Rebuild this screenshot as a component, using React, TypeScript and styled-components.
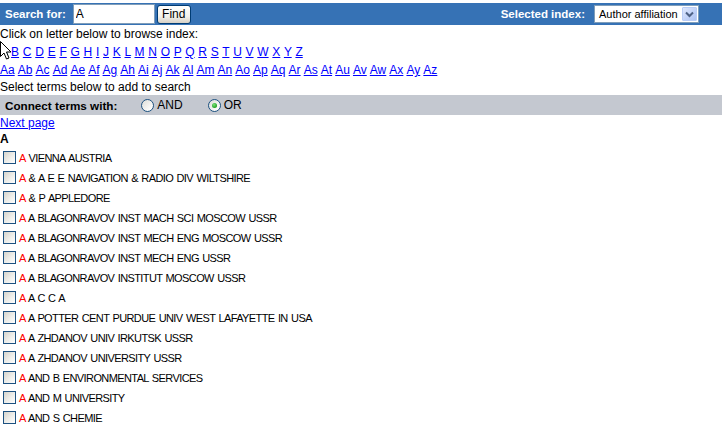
import React from "react";
import styled, { createGlobalStyle } from "styled-components";

const GlobalStyle = createGlobalStyle`
  html, body {
    margin: 0;
    padding: 0;
    background: #ffffff;
  }
  body {
    font-family: "Liberation Sans", Arial, sans-serif;
    font-size: 12px;
    color: #000000;
  }
`;

const Page = styled.div`
  padding-top: 3px;
`;

const SearchBar = styled.form`
  display: flex;
  align-items: center;
  height: 22px;
  margin: 0;
  padding: 0 23px 0 5px;
  background: #3672b5;
`;

const BarLabel = styled.span`
  color: #ffffff;
  font-weight: bold;
  font-size: 11.5px;
  white-space: nowrap;
`;

const SearchInput = styled.input`
  box-sizing: border-box;
  width: 82px;
  height: 20px;
  margin: 0 0 0 7px;
  padding: 0 2px;
  border: 1px solid #7f9db9;
  font-family: "Liberation Sans", Arial, sans-serif;
  font-size: 12px;
  color: #000;
  outline: none;
`;

const FindButton = styled.button`
  box-sizing: border-box;
  width: 34px;
  height: 19px;
  margin-left: 2px;
  padding: 0;
  border: 1px solid #003c74;
  border-radius: 3px;
  background: linear-gradient(#ffffff 0%, #f4f3ee 60%, #d6d0c5 100%);
  font-family: "Liberation Sans", Arial, sans-serif;
  font-size: 12px;
  color: #000;
`;

const Spacer = styled.div`
  flex: 1;
`;

const IndexSelect = styled.div`
  box-sizing: border-box;
  display: flex;
  align-items: center;
  width: 105px;
  height: 18px;
  margin-left: 9px;
  padding: 1px;
  border: 1px solid #7f9db9;
  background: #ffffff;
`;

const SelectValue = styled.span`
  flex: 1;
  padding-left: 3px;
  font-size: 11px;
  white-space: nowrap;
`;

const SelectArrow = styled.span`
  box-sizing: border-box;
  display: flex;
  align-items: center;
  justify-content: center;
  width: 15px;
  height: 14px;
  border: 1px solid #b9cdf6;
  border-radius: 1px;
  background: linear-gradient(135deg, #dfe8fd 0%, #bfd0f7 60%, #aec3f1 100%);
`;

const Line = styled.div<{ $h?: number }>`
  height: ${({ $h }) => $h ?? 18}px;
  line-height: ${({ $h }) => $h ?? 18}px;
  white-space: nowrap;
`;

const LinkLine = styled(Line)`
  position: relative;
  word-spacing: 0.4px;
`;

const Link = styled.a`
  color: #0000ff;
  text-decoration: underline;
  cursor: pointer;
`;

const Cursor = styled.svg`
  position: absolute;
  left: 0;
  top: -2px;
`;

const ConnectBar = styled.div`
  display: flex;
  align-items: center;
  height: 20px;
  padding-left: 5px;
  background: #c4c8d0;
`;

const ConnectLabel = styled.span`
  font-weight: bold;
  font-size: 11.7px;
  margin-right: 24px;
`;

const RadioOption = styled.label<{ $gap?: number }>`
  display: flex;
  align-items: center;
  gap: 3px;
  margin-right: ${({ $gap }) => $gap ?? 0}px;
  font-size: 12px;
`;

const RadioCircle = styled.span<{ $checked?: boolean }>`
  box-sizing: border-box;
  position: relative;
  display: inline-block;
  width: 13px;
  height: 13px;
  border: 1px solid #1c5180;
  border-radius: 50%;
  background: linear-gradient(135deg, #dcdcd7 0%, #ffffff 90%);

  &::after {
    content: "";
    display: ${({ $checked }) => ($checked ? "block" : "none")};
    position: absolute;
    left: 3px;
    top: 3px;
    width: 5px;
    height: 5px;
    border-radius: 50%;
    background: radial-gradient(circle at 40% 35%, #7be27b 0%, #21a121 70%);
  }
`;

const Heading = styled.div`
  height: 16px;
  line-height: 16px;
  font-weight: bold;
`;

const TermList = styled.ul`
  list-style: none;
  margin: 0;
  padding: 0;
`;

const TermRow = styled.li`
  display: flex;
  align-items: center;
  height: 20px;
  padding-left: 3px;
  font-size: 11px;
  letter-spacing: -0.6px;
  word-spacing: 0.9px;
  white-space: pre;
`;

const CheckBox = styled.span`
  box-sizing: border-box;
  flex: none;
  width: 13px;
  height: 13px;
  margin-right: 3px;
  border: 1px solid #1c5180;
  background: linear-gradient(135deg, #d4d4ce 0%, #eeeeea 55%, #ffffff 100%);
`;

const TermText = styled.span`
  padding-top: 2px;
`;

const Match = styled.span`
  color: #ff0000;
`;

const letters = "BCDEFGHIJKLMNOPQRSTUVWXYZ".split("");
const subLetters = "abcdefghijklmnopqrstuvwxyz".split("").map((c) => "A" + c);

const terms = [
  " VIENNA AUSTRIA",
  " & A E E NAVIGATION & RADIO DIV WILTSHIRE",
  " & P APPLEDORE",
  " A BLAGONRAVOV INST MACH SCI MOSCOW USSR",
  " A BLAGONRAVOV INST MECH ENG MOSCOW USSR",
  " A BLAGONRAVOV INST MECH ENG USSR",
  " A BLAGONRAVOV INSTITUT MOSCOW USSR",
  " A C C A",
  " A POTTER CENT PURDUE UNIV WEST LAFAYETTE IN USA",
  " A ZHDANOV UNIV IRKUTSK USSR",
  " A ZHDANOV UNIVERSITY USSR",
  " AND B ENVIRONMENTAL SERVICES",
  " AND M UNIVERSITY",
  " AND S CHEMIE",
];

export default function App() {
  return (
    <Page>
      <GlobalStyle />
      <SearchBar onSubmit={(e) => e.preventDefault()}>
        <BarLabel>Search for:</BarLabel>
        <SearchInput defaultValue="A" />
        <FindButton type="submit">Find</FindButton>
        <Spacer />
        <BarLabel>Selected index:</BarLabel>
        <IndexSelect>
          <SelectValue>Author affiliation</SelectValue>
          <SelectArrow>
            <svg width="9" height="7" viewBox="0 0 9 7">
              <path d="M1 1.5 L4.5 5 L8 1.5" fill="none" stroke="#4d6185" strokeWidth="2" />
            </svg>
          </SelectArrow>
        </IndexSelect>
      </SearchBar>

      <Line>Click on letter below to browse index:</Line>
      <LinkLine>
        A{" "}
        {letters.map((l, i) => (
          <React.Fragment key={l}>
            <Link>{l}</Link>
            {i < letters.length - 1 ? " " : ""}
          </React.Fragment>
        ))}
        <Cursor width="12" height="19" viewBox="0 0 12 19">
          <path
            d="M0.5 0.5 L0.5 15.5 L4 12 L6.5 18 L9 17 L6.5 11 L11 11 Z"
            fill="#ffffff"
            stroke="#000000"
            strokeWidth="1"
          />
        </Cursor>
      </LinkLine>
      <LinkLine>
        {subLetters.map((l, i) => (
          <React.Fragment key={l}>
            <Link>{l}</Link>
            {i < subLetters.length - 1 ? " " : ""}
          </React.Fragment>
        ))}
      </LinkLine>
      <Line $h={16}>Select terms below to add to search</Line>

      <ConnectBar>
        <ConnectLabel>Connect terms with:</ConnectLabel>
        <RadioOption $gap={25}>
          <RadioCircle />
          AND
        </RadioOption>
        <RadioOption>
          <RadioCircle $checked />
          OR
        </RadioOption>
      </ConnectBar>

      <Line $h={16}>
        <Link>Next page</Link>
      </Line>
      <Heading>A</Heading>

      <TermList>
        {terms.map((t) => (
          <TermRow key={t}>
            <CheckBox />
            <TermText>
              <Match>A</Match>
              {t}
            </TermText>
          </TermRow>
        ))}
      </TermList>
    </Page>
  );
}
